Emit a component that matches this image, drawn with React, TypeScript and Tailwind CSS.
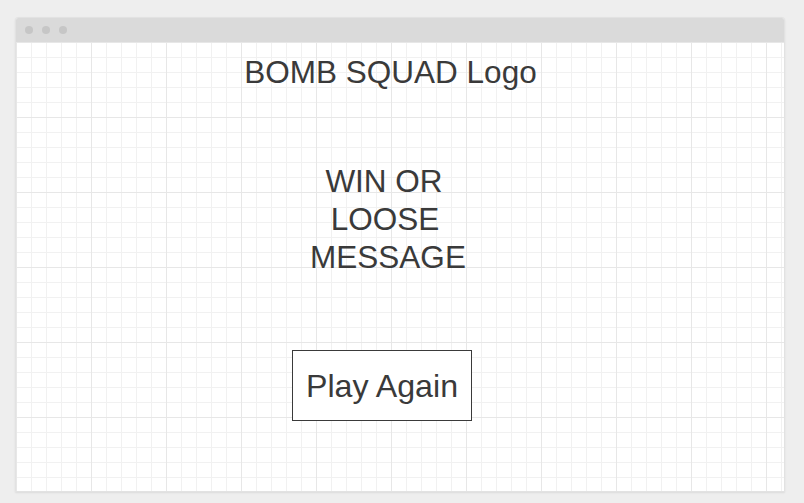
export default function App() {
  return (
    <div className="w-[804px] h-[503px] bg-[#eeeeee] pt-[17px] pl-[15px]">
      <div className="w-[770px] h-[475px] flex flex-col bg-white border border-[#e2e2e2] shadow-[0_1px_2px_rgba(0,0,0,0.08)] rounded-t-[3px] overflow-hidden">
        <div className="h-[24px] bg-[#dadada] flex items-center gap-[9px] pl-[9px] shrink-0">
          <span className="w-[8px] h-[8px] rounded-full bg-[#c6c6c6]" />
          <span className="w-[8px] h-[8px] rounded-full bg-[#c6c6c6]" />
          <span className="w-[8px] h-[8px] rounded-full bg-[#c6c6c6]" />
        </div>
        <div
          className="flex-1 flex flex-col items-center pt-[11px] text-[#3a3a3a] text-[31.5px] leading-[38px]
            bg-[image:linear-gradient(to_right,#e7e7e7_1px,transparent_1px),linear-gradient(to_bottom,#e7e7e7_1px,transparent_1px),linear-gradient(to_right,#f1f1f1_1px,transparent_1px),linear-gradient(to_bottom,#f1f1f1_1px,transparent_1px)]
            bg-[size:75px_75px,75px_75px,15px_15px,15px_15px]"
          style={{ fontFamily: '"Liberation Sans", Arial, sans-serif' }}
        >
          <h1 className="mr-[19px]">BOMB SQUAD Logo</h1>
          <div className="mt-[71px] mr-[24px] flex flex-col items-center">
            <span className="pr-[8px]">WIN OR</span>
            <span className="pr-[6px]">LOOSE</span>
            <span>MESSAGE</span>
          </div>
          <button className="mt-[74px] mr-[36px] w-[180px] h-[71px] border border-[#3a3a3a] bg-white text-[32.2px]">
            Play Again
          </button>
        </div>
      </div>
    </div>
  );
}
